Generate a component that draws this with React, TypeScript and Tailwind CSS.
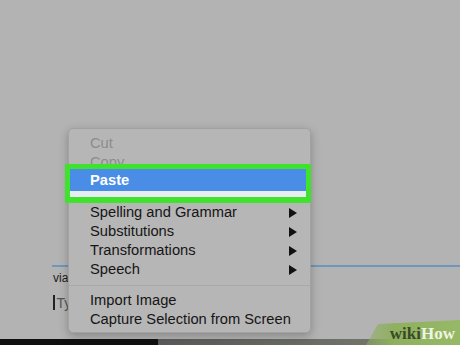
import { ReactNode } from "react";

function Arrow() {
  return (
    <svg width="8" height="10" viewBox="0 0 8 10" className="shrink-0">
      <polygon points="0,0 8,5 0,10" fill="#111" />
    </svg>
  );
}

function Item({ children, disabled, sub }: { children?: ReactNode; disabled?: boolean; sub?: boolean }) {
  return (
    <div
      className={`flex h-[19px] items-center justify-between pl-[21px] pr-[13px] text-[14.7px] leading-none ${
        disabled ? "text-[#8c8c8c]" : "text-[#151515]"
      }`}
    >
      <span>{children}</span>
      {sub && <Arrow />}
    </div>
  );
}

export default function App() {
  return (
    <div className="relative h-[345px] w-[460px] overflow-hidden bg-[#b3b3b3] font-['Liberation_Sans',Arial,sans-serif]">
      {/* Document area */}
      <div className="flex h-full flex-col">
        <div className="h-[265px] shrink-0" />
        <div className="ml-[52px] h-[2px] bg-[#6d98bd]" />
        <div className="ml-[53px] mt-[5px] text-[12px] leading-none text-[#1c1c1c]">via</div>
        <div className="ml-[53px] mt-[11px] flex h-[15px] items-center">
          <div className="h-[15px] w-[1.5px] bg-[#222]" />
          <span className="ml-[2px] text-[14px] leading-none text-[#555]">Ty</span>
        </div>
        <div className="flex-1" />
        <div className="flex h-[6px] shrink-0">
          <div className="w-[158px] bg-[#101010]" />
          <div className="flex-1 bg-gradient-to-r from-[#5a5a5a] to-[#7a7f70]" />
        </div>
      </div>

      {/* Context menu */}
      <div className="absolute left-[68px] top-[128px] flex h-[205px] w-[243px] flex-col rounded-[5px] border border-[#a2a2a2] bg-[#b6b6b6] pt-[5px] shadow-[0_3px_10px_rgba(0,0,0,0.25)]">
        <Item disabled>Cut</Item>
        <Item disabled>Copy</Item>
        <Item />
        <div className="h-[12px]" />
        <Item sub>Spelling and Grammar</Item>
        <Item sub>Substitutions</Item>
        <Item sub>Transformations</Item>
        <Item sub>Speech</Item>
        <div className="flex h-[12px] items-center">
          <div className="h-px w-full bg-[#a9a9a9]" />
        </div>
        <Item>Import Image</Item>
        <Item>Capture Selection from Screen</Item>
      </div>

      {/* Highlight annotation over the Paste item */}
      <div className="absolute left-[65px] top-[164px] flex h-[39px] w-[246px] flex-col border-[5px] border-b-[6px] border-[#3fe22c]">
        <div className="flex h-[22px] items-center bg-[#4a8de6] pl-[20px] text-[14.7px] font-bold leading-none text-white">
          Paste
        </div>
        <div className="flex-1 bg-[#e6eef3]" />
      </div>

      {/* wikiHow badge */}
      <div className="absolute bottom-0 right-0 h-[26px] w-[100px]">
        <svg width="100" height="26" viewBox="0 0 100 26" className="absolute inset-0">
          <defs>
            <linearGradient id="g" x1="0" y1="0" x2="1" y2="0">
              <stop offset="0" stopColor="#8fae66" stopOpacity="0.5" />
              <stop offset="0.3" stopColor="#8fb05e" />
              <stop offset="1" stopColor="#97b866" />
            </linearGradient>
          </defs>
          <polygon points="6,26 18,5 100,1 100,26" fill="url(#g)" />
        </svg>
        <div className="relative flex h-full items-end justify-end pb-[3px] pr-[5px] font-['Liberation_Serif',serif] text-[17px] font-bold leading-none">
          <span className="text-[#3a4a28]">wiki</span>
          <span className="text-[#eef4e2]">How</span>
        </div>
      </div>
    </div>
  );
}
